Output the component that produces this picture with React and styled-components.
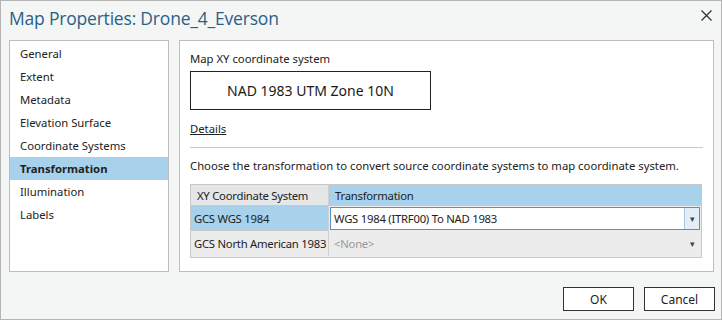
import React from 'react'
import styled, { createGlobalStyle } from 'styled-components'

const GlobalStyle = createGlobalStyle`
  html, body {
    margin: 0;
    padding: 0;
    background: #f4f6f6;
  }
  body {
    font-family: "Noto Sans", "Open Sans", sans-serif;
    font-size: 11.3px;
    color: #222;
  }
`

const navItems = [
  'General',
  'Extent',
  'Metadata',
  'Elevation Surface',
  'Coordinate Systems',
  'Transformation',
  'Illumination',
  'Labels'
]

export default function App() {
  return (
    <>
      <GlobalStyle />
      <Dialog>
        <TitleBar>
          <Title>Map Properties: Drone_4_Everson</Title>
          <Close>
            <svg width="11" height="11" viewBox="0 0 11 11">
              <path d="M0.5 0.5 L10.5 10.5 M10.5 0.5 L0.5 10.5" stroke="#333" strokeWidth="1.3" />
            </svg>
          </Close>
        </TitleBar>
        <Body>
          <NavList>
            {navItems.map(item => (
              <NavItem key={item} active={item === 'Transformation'}>{item}</NavItem>
            ))}
          </NavList>
          <Panel>
            <Label>Map XY coordinate system</Label>
            <CoordBox>NAD 1983 UTM Zone 10N</CoordBox>
            <DetailsLink>Details</DetailsLink>
            <Separator />
            <Hint>Choose the transformation to convert source coordinate systems to map coordinate system.</Hint>
            <Table>
              <HeadCell>XY Coordinate System</HeadCell>
              <HeadCell blue>Transformation</HeadCell>
              <Cell selected>GCS WGS 1984</Cell>
              <DropCell>
                <Dropdown focused>
                  <DropText>WGS 1984 (ITRF00) To NAD 1983</DropText>
                  <Arrow focused>▾</Arrow>
                </Dropdown>
              </DropCell>
              <Cell>GCS North American 1983</Cell>
              <DropCell>
                <Dropdown>
                  <DropText muted>&lt;None&gt;</DropText>
                  <Arrow>▾</Arrow>
                </Dropdown>
              </DropCell>
            </Table>
          </Panel>
        </Body>
        <Footer>
          <Button>OK</Button>
          <Button>Cancel</Button>
        </Footer>
      </Dialog>
    </>
  )
}

const Dialog = styled.div`
  width: 722px;
  height: 320px;
  box-sizing: border-box;
  border: 1px solid #b5b5b5;
  background: #f4f6f6;
  display: flex;
  flex-direction: column;
`
const TitleBar = styled.div`
  height: 39px;
  display: flex;
  align-items: center;
  justify-content: space-between;
  padding: 0 9px 0 8px;
`
const Title = styled.div`
  font-family: "Open Sans", "Noto Sans", sans-serif;
  font-size: 17.5px;
  color: #2b5f86;
  letter-spacing: -0.2px;
  margin-top: -5px;
`
const Close = styled.div`
  display: flex;
  margin-top: -10px;
`
const Body = styled.div`
  display: flex;
  gap: 10px;
  padding: 0 7px 0 8px;
  height: 232px;
`
const NavList = styled.div`
  width: 160px;
  box-sizing: border-box;
  background: #fff;
  border: 1px solid #bdbdbd;
  padding-top: 1px;
`
const NavItem = styled.div`
  height: 23px;
  line-height: 23px;
  padding-left: 10px;
  white-space: nowrap;
  font-weight: ${p => (p.active ? 700 : 400)};
  background: ${p => (p.active ? '#a8d1ec' : 'transparent')};
`
const Panel = styled.div`
  flex: 1;
  box-sizing: border-box;
  background: #fff;
  border: 1px solid #bdbdbd;
  padding: 9px 10px 0 10px;
  white-space: nowrap;
`
const Label = styled.div`
  line-height: 18px;
  margin-bottom: 3px;
`
const CoordBox = styled.div`
  width: 241px;
  height: 39px;
  box-sizing: border-box;
  border: 1px solid #222;
  display: flex;
  align-items: center;
  justify-content: center;
  font-size: 14px;
  color: #1a1a1a;
`
const DetailsLink = styled.div`
  margin-top: 10px;
  line-height: 18px;
  text-decoration: underline;
  width: fit-content;
`
const Separator = styled.div`
  height: 1px;
  background: #c9c9c9;
  margin-top: 9px;
`
const Hint = styled.div`
  margin-top: 9px;
  line-height: 18px;
`
const Table = styled.div`
  margin-top: 9px;
  display: grid;
  grid-template-columns: 138px 1fr;
  grid-template-rows: 21px 25px 25px;
  border: 1px solid #c8c8c8;
  background: #ececec;
  margin-right: 1px;
  padding-bottom: 1px;
  letter-spacing: -0.25px;
`
const HeadCell = styled.div`
  display: flex;
  align-items: center;
  padding-left: 6px;
  background: ${p => (p.blue ? '#a8d1ec' : '#e4e6e7')};
  border-right: ${p => (p.blue ? 'none' : '1px solid #d0d0d0')};
  border-bottom: 1px solid #c8c8c8;
`
const Cell = styled.div`
  display: flex;
  align-items: center;
  padding-left: 3px;
  overflow: hidden;
  background: ${p => (p.selected ? '#a8d1ec' : '#ececec')};
  border-right: 1px solid #d0d0d0;
  border-bottom: ${p => (p.selected ? '1px solid #c8c8c8' : 'none')};
`
const DropCell = styled.div`
  display: flex;
  padding: 1px;
  background: #ececec;
`
const Dropdown = styled.div`
  flex: 1;
  display: flex;
  align-items: center;
  box-sizing: border-box;
  border: 1px solid ${p => (p.focused ? '#5b8fc4' : 'transparent')};
  background: ${p => (p.focused ? '#fff' : 'transparent')};
`
const DropText = styled.div`
  flex: 1;
  padding-left: 3px;
  color: ${p => (p.muted ? '#9a9a9a' : '#222')};
`
const Arrow = styled.div`
  width: 14px;
  align-self: stretch;
  display: flex;
  align-items: center;
  justify-content: center;
  font-size: 9px;
  color: #444;
  background: ${p => (p.focused ? '#e3eef9' : 'transparent')};
  border-left: ${p => (p.focused ? '1px solid #a9c6e4' : 'none')};
`
const Footer = styled.div`
  flex: 1;
  display: flex;
  justify-content: flex-end;
  align-items: flex-start;
  gap: 10px;
  padding: 15px 6px 0 0;
`
const Button = styled.button`
  width: 71px;
  height: 24px;
  background: #fff;
  border: 1px solid #333;
  font-family: "Noto Sans", "Open Sans", sans-serif;
  font-size: 12px;
  color: #222;
  padding: 0;
`
